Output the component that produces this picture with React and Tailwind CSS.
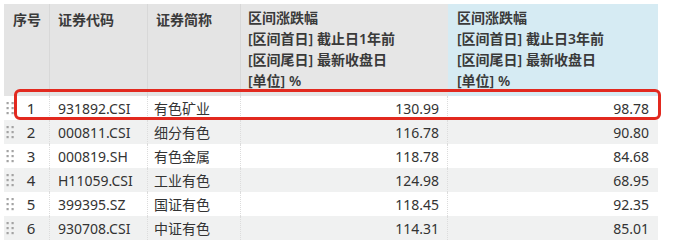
import React from 'react';

const rows = [
  { no: 1, code: '931892.CSI', name: '有色矿业', y1: '130.99', y3: '98.78' },
  { no: 2, code: '000811.CSI', name: '细分有色', y1: '116.78', y3: '90.80' },
  { no: 3, code: '000819.SH', name: '有色金属', y1: '118.78', y3: '84.68' },
  { no: 4, code: 'H11059.CSI', name: '工业有色', y1: '124.98', y3: '68.95' },
  { no: 5, code: '399395.SZ', name: '国证有色', y1: '118.45', y3: '92.35' },
  { no: 6, code: '930708.CSI', name: '中证有色', y1: '114.31', y3: '85.01' },
];

const Grip = () => (
  <svg width="10" height="14" viewBox="0 0 10 14" className="shrink-0">
    {[1, 6, 11].map((cy) => (
      <g key={cy}>
        <rect x="1.5" y={cy} width="2.2" height="2.2" fill="#a3a3a3" />
        <rect x="6.5" y={cy} width="2.2" height="2.2" fill="#a3a3a3" />
      </g>
    ))}
  </svg>
);

const RangeHeader = ({ span }) => (
  <div className="flex flex-col gap-[4px] leading-[17px]">
    <span>区间涨跌幅</span>
    <span>[区间首日] 截止日{span}年前</span>
    <span>[区间尾日] 最新收盘日</span>
    <span>[单位] %</span>
  </div>
);

export default function App() {
  return (
    <div
      className="relative w-[673px] h-[250px] bg-white text-[#333]"
      style={{ fontFamily: '"Noto Sans", "Noto Sans CJK SC", sans-serif' }}
    >
      <div className="pt-[4px] pl-[4px]">
        {/* header */}
        <div className="flex h-[92px] text-[14px] font-semibold text-[#3a3a3a]">
          <div className="w-[46px] bg-[#e4e4e4] pl-[9px] pt-[5px] border-r border-[#d8d8d8]">序号</div>
          <div className="w-[98px] bg-[#e4e4e4] pl-[8px] pt-[5px] border-r border-[#d8d8d8]">证券代码</div>
          <div className="w-[93px] bg-[#e4e4e4] pl-[8px] pt-[5px] border-r border-[#d8d8d8]">证券简称</div>
          <div className="w-[207px] bg-[#e6e6e6] pl-[7px] pt-[5px]">
            <RangeHeader span="1" />
          </div>
          <div className="w-[210px] bg-[#d6ebf3] pl-[9px] pt-[5px]">
            <RangeHeader span="3" />
          </div>
        </div>

        {/* body */}
        <div className="text-[14px]">
          {rows.map((r, i) => (
            <div
              key={r.no}
              className={`flex h-[24px] items-center ${i % 2 === 1 ? 'bg-[#f0f1f1]' : 'bg-white'} w-[654px]`}
            >
              <div className="w-[46px] h-full flex items-center pl-[1px] border-r border-dotted border-[#dcdcdc]">
                <Grip />
                <span className="flex-1 text-center pr-[2px] text-[15px]">{r.no}</span>
              </div>
              <div className="w-[98px] h-full flex items-center pl-[8px] border-r border-dotted border-[#dcdcdc]">{r.code}</div>
              <div className="w-[93px] h-full flex items-center pl-[6px] border-r border-dotted border-[#dcdcdc]">{r.name}</div>
              <div className="w-[207px] h-full flex items-center justify-end pr-[8px] border-r border-dotted border-[#dcdcdc]">{r.y1}</div>
              <div className="w-[210px] h-full flex items-center justify-end pr-[9px]">{r.y3}</div>
            </div>
          ))}
        </div>
      </div>

      {/* highlight box */}
      <div className="absolute left-[14px] top-[89px] w-[647px] h-[31px] border-[3px] border-[#e2291f] rounded-[6px]" />
    </div>
  );
}
